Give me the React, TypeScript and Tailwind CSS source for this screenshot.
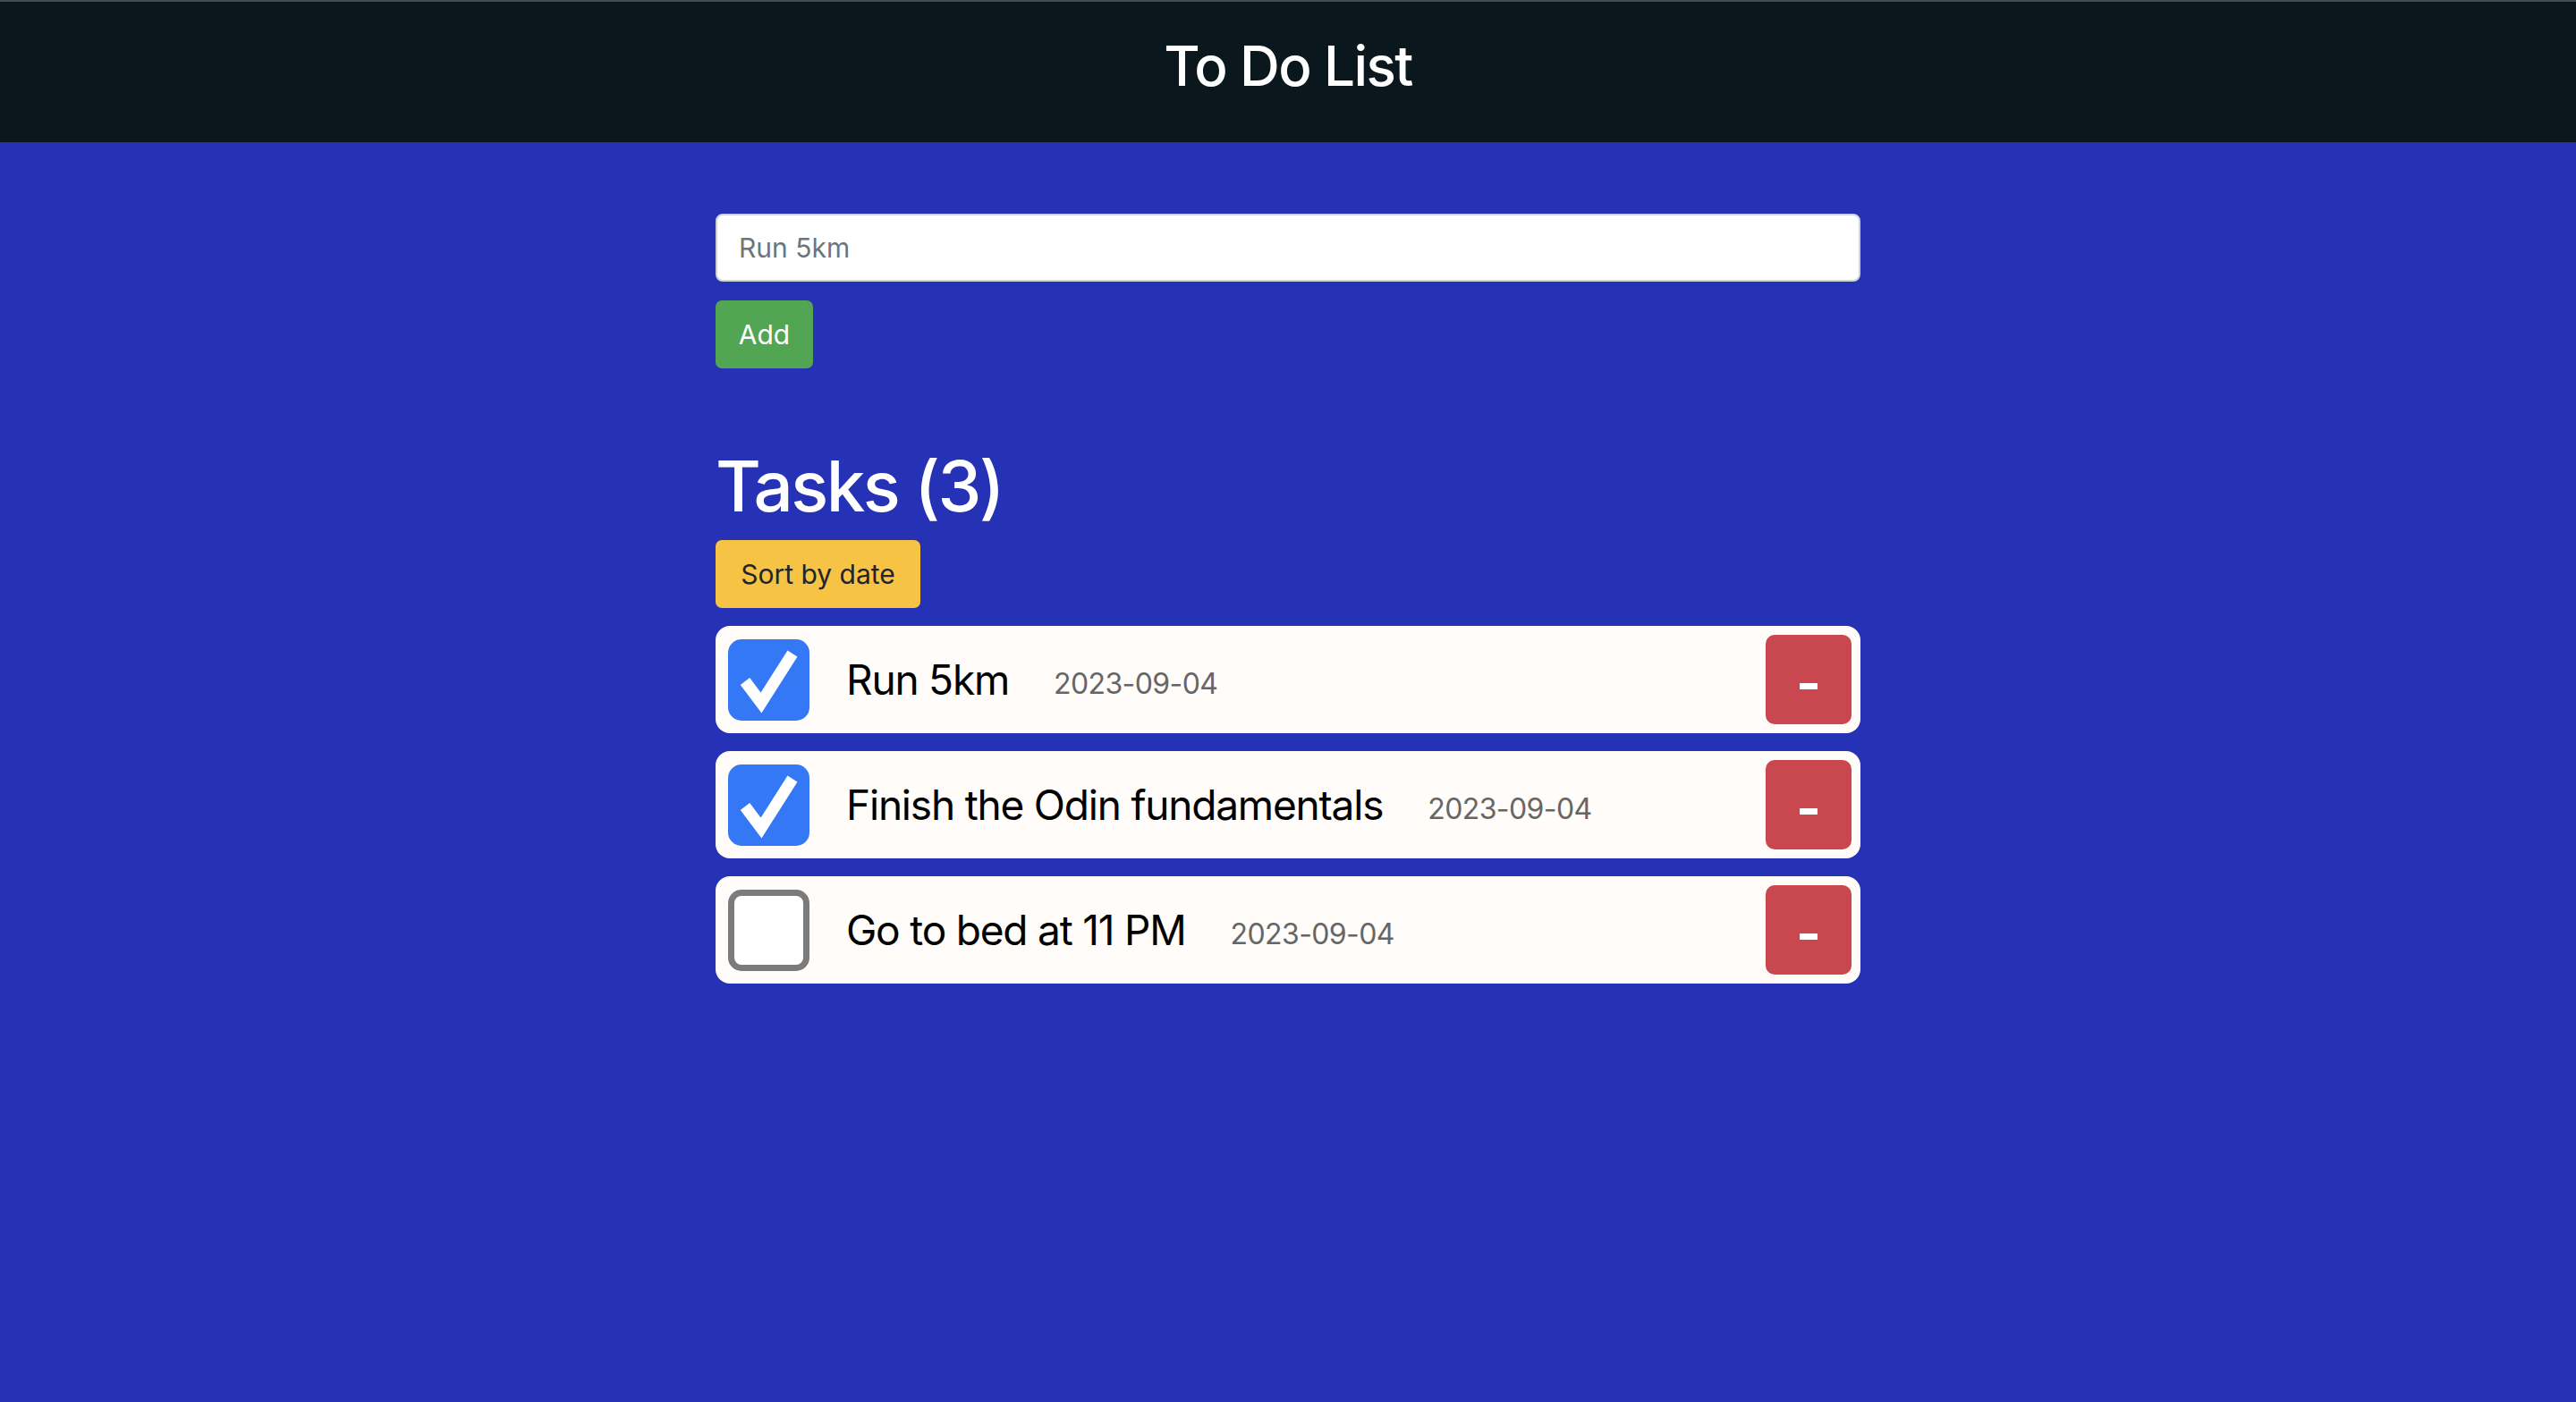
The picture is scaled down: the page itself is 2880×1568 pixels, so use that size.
import { useState } from "react";

type Task = { id: number; title: string; date: string; done: boolean };

const initialTasks: Task[] = [
  { id: 1, title: "Run 5km", date: "2023-09-04", done: true },
  { id: 2, title: "Finish the Odin fundamentals", date: "2023-09-04", done: true },
  { id: 3, title: "Go to bed at 11 PM", date: "2023-09-04", done: false },
];

function CheckBox({ checked, onToggle }: { checked: boolean; onToggle: () => void }) {
  if (!checked) {
    return (
      <button
        onClick={onToggle}
        className="w-[91px] h-[91px] shrink-0 rounded-[15px] border-[7px] border-[#7b7b7b] bg-white"
      />
    );
  }
  return (
    <button
      onClick={onToggle}
      className="w-[91px] h-[91px] shrink-0 rounded-[15px] bg-[#3478f6] flex items-center justify-center"
    >
      <svg viewBox="0 0 91 91" className="w-[91px] h-[91px]">
        <polyline
          points="19,47 37,71 72,16"
          fill="none"
          stroke="white"
          strokeWidth="13"
          strokeLinejoin="miter"
          strokeLinecap="butt"
        />
      </svg>
    </button>
  );
}

export default function App() {
  const [tasks, setTasks] = useState<Task[]>(initialTasks);
  const [text, setText] = useState("");

  const toggle = (id: number) =>
    setTasks((t) => t.map((x) => (x.id === id ? { ...x, done: !x.done } : x)));
  const remove = (id: number) => setTasks((t) => t.filter((x) => x.id !== id));

  return (
    <div className="min-h-[1568px] w-full bg-[#2532b6] font-['Inter',sans-serif]">
      {/* Header */}
      <header className="h-[159px] bg-[#0a181d] border-t-[2px] border-[#454a4d] flex justify-center">
        <h1 className="text-white text-[62px] leading-none font-medium tracking-[-1.6px] pt-[41px]">
          To Do List
        </h1>
      </header>

      <main className="w-[1280px] mx-auto pt-[80px]">
        {/* New task form */}
        <input
          value={text}
          onChange={(e) => setText(e.target.value)}
          placeholder="Run 5km"
          className="block w-full h-[76px] rounded-[8px] border-2 border-[#ced4da] bg-white px-[24px] text-[30px] text-[#212529] placeholder:text-[#6c757d] outline-none"
        />
        <button className="mt-[21px] h-[76px] w-[109px] rounded-[7px] bg-[#52a552] text-white text-[30px]">
          Add
        </button>

        {/* Task list */}
        <h2 className="mt-[84px] text-white text-[78px] leading-[96px] font-medium tracking-[-2.6px] mb-[12px]">
          Tasks ({tasks.length})
        </h2>
        <button className="h-[76px] w-[229px] rounded-[7px] bg-[#f6c344] text-[#212529] text-[30px]">
          Sort by date
        </button>

        <ul className="mt-[20px] flex flex-col gap-[20px]">
          {tasks.map((t) => (
            <li
              key={t.id}
              className="h-[120px] rounded-[16px] bg-[#fffcf9] flex items-center pl-[14px] pr-[10px]"
            >
              <CheckBox checked={t.done} onToggle={() => toggle(t.id)} />
              <span className="ml-[41px] text-[46px] text-black tracking-[-1.2px]">{t.title}</span>
              <span className="ml-[50px] mt-[10px] text-[32px] text-[#666666] tracking-[-0.6px]">
                {t.date}
              </span>
              <button
                onClick={() => remove(t.id)}
                className="ml-auto w-[96px] h-[100px] rounded-[10px] bg-[#c9474e] text-white text-[60px] font-bold leading-none pt-[6px]"
              >
                -
              </button>
            </li>
          ))}
        </ul>
      </main>
    </div>
  );
}
